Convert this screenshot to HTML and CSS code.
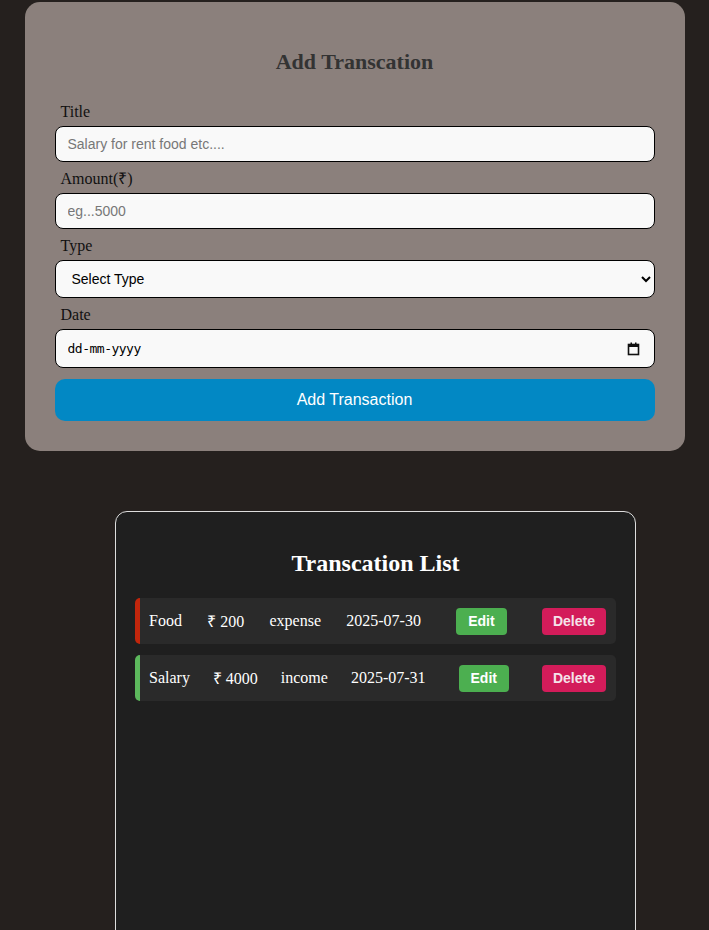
FILE: index.html
```html
<!DOCTYPE html>
<html lang="en">
<head>
<meta charset="utf-8">
<title>Expense Tracker</title>
<link rel="stylesheet" href="styles.css">
</head>
<body>
  <form class="form-card">
    <h2 class="form-title">Add Transcation</h2>
    <label class="field-label" for="title">Title</label>
    <input class="field-input" id="title" type="text" placeholder="Salary for rent food etc....">
    <label class="field-label" for="amount">Amount(₹)</label>
    <input class="field-input" id="amount" type="text" placeholder="eg...5000">
    <label class="field-label" for="type">Type</label>
    <select class="field-select" id="type">
      <option>Select Type</option>
      <option>income</option>
      <option>expense</option>
    </select>
    <label class="field-label" for="date">Date</label>
    <div class="date-field">
      <input class="date-input" id="date" type="text" placeholder="dd-mm-yyyy">
      <svg class="cal-icon" width="13" height="14" viewBox="0 0 13 14" aria-hidden="true">
        <rect x="1.5" y="2.5" width="10" height="10" fill="none" stroke="#111" stroke-width="1.6"/>
        <rect x="1.5" y="2" width="10" height="3" fill="#111"/>
        <rect x="3.5" y="0.5" width="1.5" height="2" fill="#111"/>
        <rect x="8" y="0.5" width="1.5" height="2" fill="#111"/>
      </svg>
    </div>
    <button class="submit-btn" type="button">Add Transaction</button>
  </form>

  <section class="list-card">
    <h2 class="list-title">Transcation List</h2>
    <ul class="tx-list">
      <li class="tx-row tx-expense">
        <span>Food</span>
        <span>₹ 200</span>
        <span>expense</span>
        <span>2025-07-30</span>
        <button class="btn btn-edit" type="button">Edit</button>
        <button class="btn btn-delete" type="button">Delete</button>
      </li>
      <li class="tx-row tx-income">
        <span>Salary</span>
        <span>₹ 4000</span>
        <span>income</span>
        <span>2025-07-31</span>
        <button class="btn btn-edit" type="button">Edit</button>
        <button class="btn btn-delete" type="button">Delete</button>
      </li>
    </ul>
  </section>
</body>
</html>
```
FILE: styles.css
```css
* { box-sizing: border-box; }

body {
  margin: 0;
  padding-top: 2px;
  background: #25201e;
  font-family: "Liberation Serif", "Times New Roman", serif;
}

.form-card {
  display: flex;
  flex-direction: column;
  width: 660px;
  margin: 0 auto;
  padding: 22px 30px 30px;
  background: #8b807c;
  border-radius: 15px;
}

.form-title {
  margin: 24px 0 27px;
  text-align: center;
  font-size: 22px;
  color: #333;
  line-height: 28px;
}

.field-label {
  display: block;
  margin: 0 0 5px 6px;
  font-size: 16px;
  line-height: 18px;
  color: #111;
}

.field-input,
.field-select,
.date-field {
  width: 100%;
  margin-bottom: 8px;
  border: 1px solid #000;
  border-radius: 8px;
  background: #f9f9f9;
  font-family: "Liberation Sans", Arial, sans-serif;
  font-size: 14px;
}

.field-input {
  height: 36px;
  padding: 0 12px;
}

.field-input::placeholder { color: #777; }

.field-select {
  height: 38px;
  padding: 0 12px;
  color: #000;
}

.date-field {
  display: flex;
  align-items: center;
  height: 39px;
  padding: 0 12px 0 12px;
  margin-bottom: 11px;
}

.date-input {
  flex: 1;
  border: 0;
  background: transparent;
  font-family: "DejaVu Sans Mono", "Liberation Mono", monospace;
  font-size: 13px;
  letter-spacing: -0.5px;
  color: #000;
  outline: none;
  padding: 0;
}

.date-input::placeholder { color: #000; }

.cal-icon { flex: none; margin-right: 2px; }

.submit-btn {
  height: 42px;
  border: 0;
  border-radius: 10px;
  background: #0288c4;
  color: #fff;
  font-family: "Liberation Sans", Arial, sans-serif;
  font-size: 16px;
}

.list-card {
  width: 521px;
  min-height: 500px;
  margin: 60px 0 0 115px;
  padding: 20px 19px;
  background: #1f1f1f;
  border: 1px solid #ddd;
  border-radius: 12px;
}

.list-title {
  margin: 17px 0 21px;
  text-align: center;
  font-size: 24px;
  line-height: 28px;
  color: #fff;
}

.tx-list {
  list-style: none;
  margin: 0;
  padding: 0;
  display: flex;
  flex-direction: column;
  gap: 11px;
}

.tx-row {
  display: flex;
  align-items: center;
  justify-content: space-between;
  height: 46px;
  padding: 0 10px 0 9px;
  background: #2a2a2a;
  border-radius: 5px;
  border-left: 5px solid;
  color: #fff;
  font-size: 16px;
}

.tx-expense { border-left-color: #c2260c; }
.tx-income { border-left-color: #5cb85c; }

.btn {
  margin-left: 10px;
  height: 27px;
  padding: 0 11px;
  border: 0;
  border-radius: 4px;
  font-family: "Liberation Sans", Arial, sans-serif;
  font-weight: bold;
  font-size: 14px;
}

.btn-edit { background: #4caf50; color: #fff; padding: 0 12px; }
.btn-delete { background: #d31c5a; color: #f5e3ea; }
```
